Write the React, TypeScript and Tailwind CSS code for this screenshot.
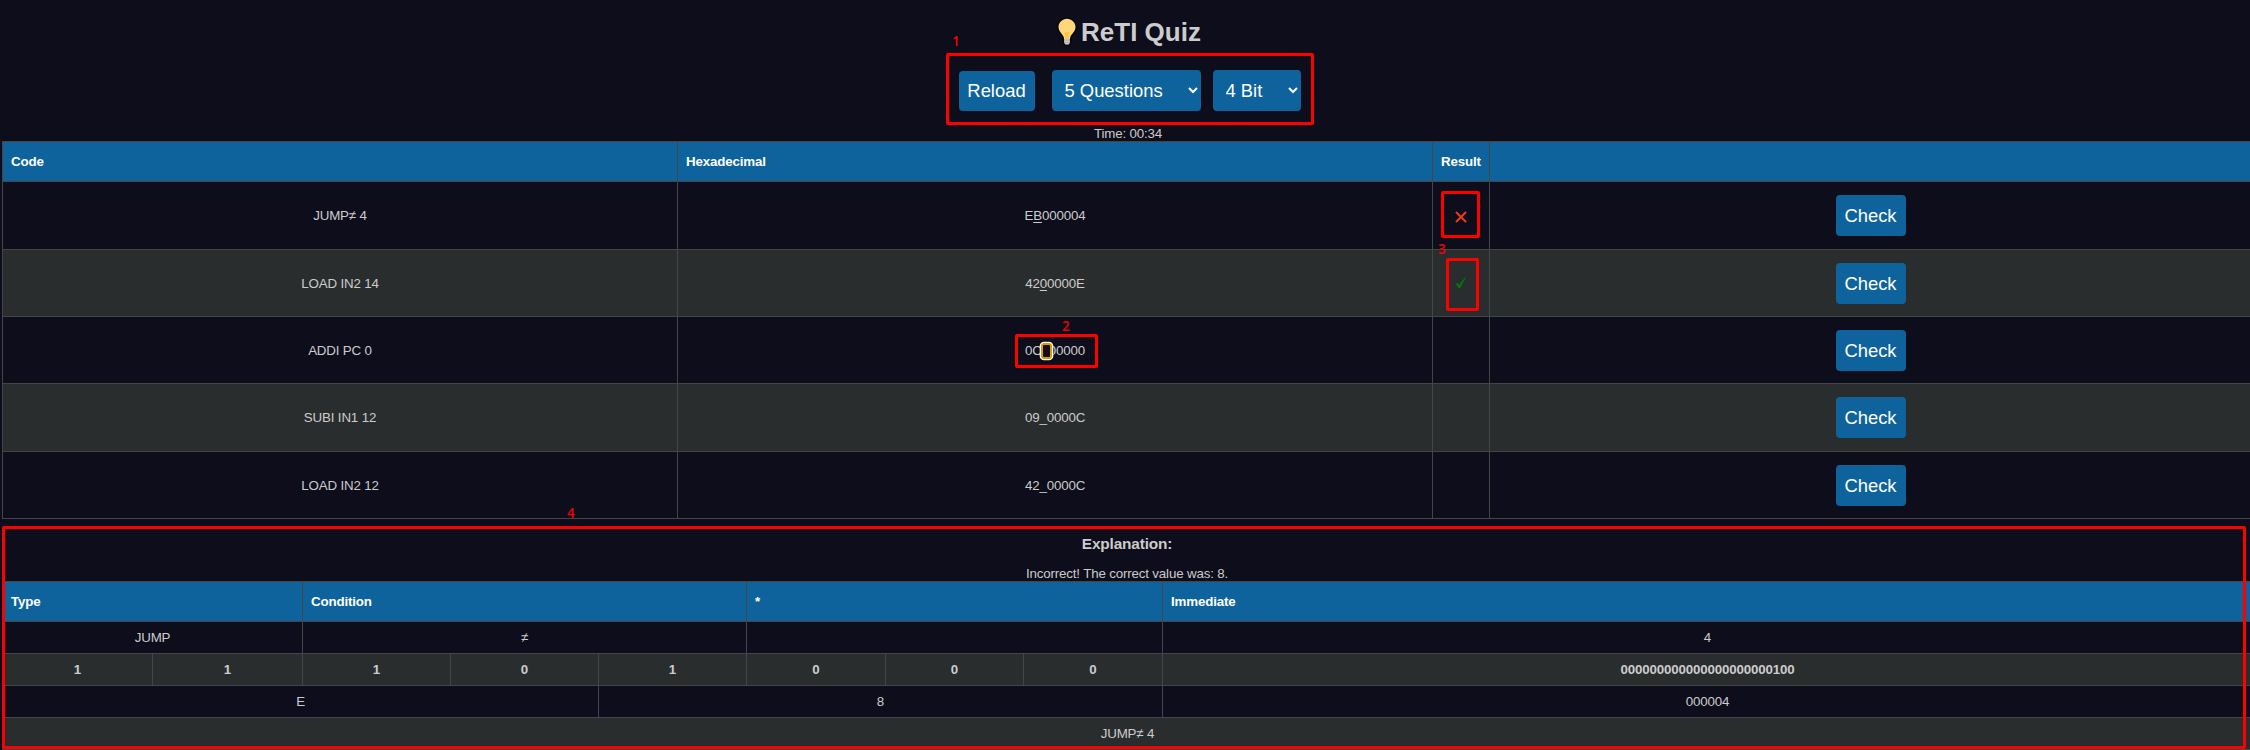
import type { ReactNode } from "react";

const questions = [
  { code: "JUMP≠ 4", head: "E", answer: "B", tail: "000004", result: "wrong", row: "h-[67px]" },
  { code: "LOAD IN2 14", head: "42", answer: "0", tail: "0000E", result: "right", row: "h-[66px]" },
  { code: "ADDI PC 0", head: "0C", answer: "", tail: "00000", result: "", row: "h-[66px]" },
  { code: "SUBI IN1 12", head: "09_0000C", answer: "", tail: "", result: "", row: "h-[67px]" },
  { code: "LOAD IN2 12", head: "42_0000C", answer: "", tail: "", result: "", row: "h-[66px]" },
];

const bits = ["1", "1", "1", "0", "1", "0", "0", "0"];

function Bulb() {
  return (
    <svg width="20" height="30" viewBox="0 0 20 30" className="shrink-0">
      <path d="M10 .4C4.600.4.300 4.600.300 9.900c0 4 2.400 6.200 4.200 8.800 1.300 1.900 1.200 3.600 1.400 5.800.2 2.600 1.400 4.400 4.100 4.400s3.900-1.800 4.100-4.400c.2-2.200.1-3.900 1.400-5.800 1.800-2.600 4.200-4.800 4.200-8.800C19.700 4.600 15.400.4 10 .4Z" fill="#050508" />
      <path d="M10 1.700C5.300 1.700 1.500 5.400 1.500 10c0 4.500 3.700 6.500 5.100 9.800.4.900.4 1.500.4 2.400h6c0-.9 0-1.500.4-2.400 1.400-3.300 5.100-5.300 5.100-9.800 0-4.600-3.800-8.300-8.500-8.300Z" fill="#ffd679" />
      <path d="M7.500 15.500h5l-.9 6.700H8.400Z" fill="#fdc02f" />
      <path d="m8.900 17 .3 5.200M11.100 17l-.3 5.200" stroke="#ffd679" strokeWidth=".6" />
      <path d="M7.100 22.200h5.800v3.600c0 .5-.5.900-1 1v.8H8.100v-.8c-.5-.1-1-.5-1-1Z" fill="#e4e4e6" />
      <path d="M7.100 23.900h5.800M7.100 25.800h5.800" stroke="#707074" strokeWidth=".6" />
    </svg>
  );
}

function Head({ children }: { children?: ReactNode }) {
  return <div className="flex h-[39px] items-center bg-[#0e639c] pl-2 font-bold text-white">{children}</div>;
}

function Cell({ children, className = "" }: { children?: ReactNode; className?: string }) {
  return <div className={`flex items-center justify-center ${className}`}>{children}</div>;
}

export default function App() {
  return (
    <div className="relative h-[750px] w-[2250px] overflow-hidden bg-[#0d0d1b] font-['Liberation_Sans',Arial,sans-serif] text-[13.333px] leading-[15px] tracking-[-0.16px] text-[#cccccc]">
      <header className="flex h-[141px] flex-col items-center pt-[17px]">
        <h1 className="flex items-center pl-2 text-[26px] font-bold leading-[30px] tracking-normal">
          <Bulb />
          <span className="ml-1">ReTI Quiz</span>
        </h1>
        <div className="mt-[23px] flex h-[41px] items-center pl-[9px] text-[18.4px] tracking-normal text-white">
          <button className="mr-[17px] h-10 w-[76px] rounded bg-[#0e639c]">Reload</button>
          <select className="mr-3 h-[41px] w-[149px] rounded bg-[#0e639c] px-[9px]">
            <option>5 Questions</option>
          </select>
          <select className="h-[41px] w-[88px] rounded bg-[#0e639c] px-[9px]">
            <option>4 Bit</option>
          </select>
        </div>
        <div className="mt-[15px] pl-1.5">Time: 00:34</div>
      </header>

      <section className="ml-[2px] grid w-[2250px] grid-cols-[674px_754px_56px_761px] gap-px bg-[#454545] p-px">
        <Head>Code</Head>
        <Head>Hexadecimal</Head>
        <Head>Result</Head>
        <Head />
        {questions.map((q, i) => {
          const tone = `${q.row} ${i % 2 ? "bg-[#2a2d2e]" : "bg-[#0d0d1b]"}`;
          return [
            <Cell key={`${i}c`} className={tone}>{q.code}</Cell>,
            <Cell key={`${i}h`} className={tone}>
              {q.head}
              {q.answer && <span className="underline decoration-1 underline-offset-2">{q.answer}</span>}
              {i === 2 && (
                <span className="relative w-[7px]">
                  <span className="absolute -left-px -top-[7px] h-4 w-[11px] rounded-[3px] border-2 border-[#e59700] bg-[#0d0d1b] shadow-[0_0_0_1.3px_#ffffff]" />
                </span>
              )}
              {q.tail}
            </Cell>,
            <Cell key={`${i}r`} className={tone}>
              {q.result === "wrong" && (
                <svg width="12" height="12" viewBox="0 0 12 12" className="mt-[2px]">
                  <path d="m1 1 10 10M11 1 1 11" stroke="#f03a17" strokeWidth="2" />
                </svg>
              )}
              {q.result === "right" && (
                <svg width="12" height="12" viewBox="0 0 12 12">
                  <path d="M1 6.800 2.800 5.900 4.300 8.600C5.800 5.300 7.600 2.800 10.300.700L11 .900C8.500 4 6.600 7.200 5 11.200H3.800Z" fill="#008000" />
                </svg>
              )}
            </Cell>,
            <Cell key={`${i}b`} className={tone}>
              <button className="h-[41px] w-[70px] rounded bg-[#0e639c] text-[18.4px] tracking-normal text-white">Check</button>
            </Cell>,
          ];
        })}
      </section>

      <section className="flex h-[62px] flex-col items-center pl-1 pt-4">
        <h2 className="text-[15.4px] font-bold leading-[17px]">Explanation:</h2>
        <p className="mt-[14px]">Incorrect! The correct value was: 8.</p>
      </section>

      <section className="ml-[2px] grid w-[2251px] grid-cols-[149px_149px_147px_147px_147px_138px_137px_138px_1fr] gap-px bg-[#454545] p-px">
        <div className="col-span-2"><Head>Type</Head></div>
        <div className="col-span-3"><Head>Condition</Head></div>
        <div className="col-span-3"><Head>*</Head></div>
        <Head>Immediate</Head>
        <Cell className="col-span-2 h-[31px] bg-[#0d0d1b]">JUMP</Cell>
        <Cell className="col-span-3 bg-[#0d0d1b]">≠</Cell>
        <Cell className="col-span-3 bg-[#0d0d1b]" />
        <Cell className="bg-[#0d0d1b]">4</Cell>
        {bits.map((bit, i) => (
          <Cell key={i} className="h-[31px] bg-[#2a2d2e] font-bold">{bit}</Cell>
        ))}
        <Cell className="bg-[#2a2d2e] font-bold">000000000000000000000100</Cell>
        <Cell className="col-span-4 h-[31px] bg-[#0d0d1b]">E</Cell>
        <Cell className="col-span-4 bg-[#0d0d1b]">8</Cell>
        <Cell className="bg-[#0d0d1b]">000004</Cell>
        <Cell className="col-span-9 h-[31px] bg-[#2a2d2e]">JUMP≠ 4</Cell>
      </section>

      <div className="pointer-events-none absolute inset-0 font-['Open_Sans',sans-serif] text-[13.5px] font-semibold leading-4 text-[#f0000a]">
        <div className="absolute left-[946px] top-[53px] h-[72px] w-[368px] rounded-[2px] border-3 border-[#ff0000]" />
        <div className="absolute left-[1015px] top-[334px] h-[34px] w-[83px] rounded-[2px] border-3 border-[#ff0000]" />
        <div className="absolute left-[1441px] top-[191px] h-[47px] w-[39px] rounded-[2px] border-3 border-[#ff0000]" />
        <div className="absolute left-[1446px] top-[258px] h-[53px] w-[33px] rounded-[2px] border-3 border-[#ff0000]" />
        <div className="absolute left-[2px] top-[526px] h-[223px] w-[2244px] rounded-[2px] border-3 border-[#ff0000]" />
        <span className="absolute left-[952px] top-[33px]">1</span>
        <span className="absolute left-[1062px] top-[318px]">2</span>
        <span className="absolute left-[1438px] top-[241px]">3</span>
        <span className="absolute left-[567px] top-[505px]">4</span>
      </div>
    </div>
  );
}
